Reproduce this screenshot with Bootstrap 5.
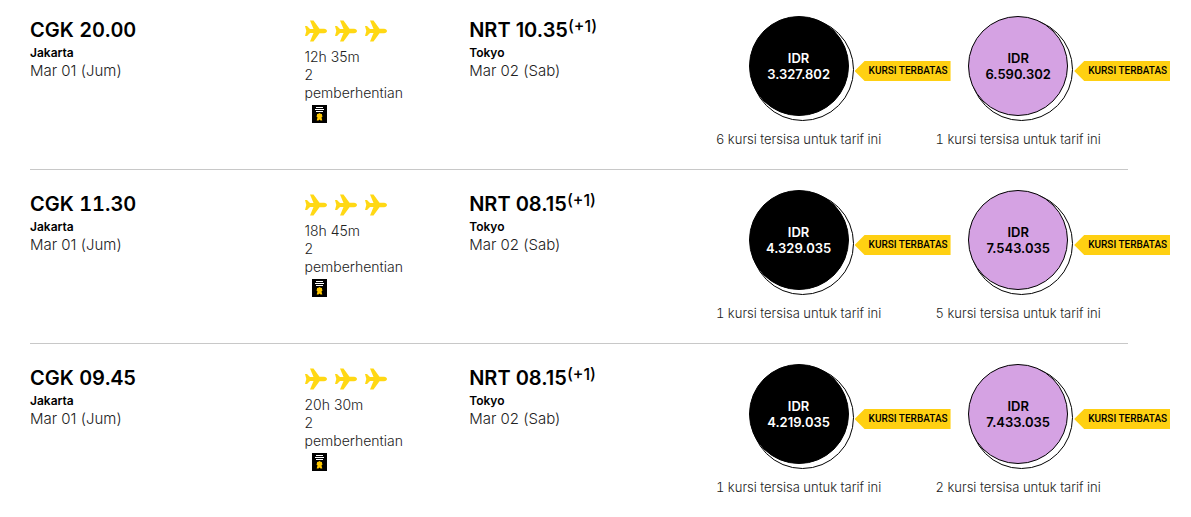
<!DOCTYPE html>
<html lang="id">
<head>
<meta charset="utf-8">
<meta name="viewport" content="width=device-width, initial-scale=1">
<title>Pilih penerbangan</title>
<link href="https://cdn.jsdelivr.net/npm/bootstrap@5.3.0/dist/css/bootstrap.min.css" rel="stylesheet">
<style>
  body { font-family: Inter, "Liberation Sans", sans-serif; font-size: 14px; line-height: 18px; color: #222; background: #fff; }
  .flights { padding: 0 63px 0 30px; margin-top: -4px; }
  .flight { height: 174px; padding-top: 20px; border-bottom: 1px solid #c8c8c8; }
  .flight:last-child { border-bottom: 0; height: 170px; }
  .w-depart { width: 25%; }
  .w-depart .time { font-variant-numeric: tabular-nums; }
  .w-route { width: 15%; }
  .w-fifth { width: 20%; }
  .light { font-weight: 300; }
  .time { font-size: 20px; line-height: 28px; font-weight: 600; color: #000; margin: 0; white-space: nowrap; }
  .time sup { font-size: 16px; line-height: 0; font-weight: 500; top: -5px; vertical-align: baseline; }
  .city { font-size: 12px; line-height: 18px; font-weight: 600; color: #000; }
  .date { font-size: 15px; }
  .stops { width: 105px; }
  .planes { height: 32px; padding-top: 4px; }
  .plane { width: 22px; height: 22px; fill: #ffd814; }
  .cert { width: 15px; height: 18px; margin: 3px 0 0 7px; display: block; }
  .fare-circle { width: 100px; height: 100px; }
  .fare-circle::before { content: ""; position: absolute; inset: 2px -5px -5px 2px; border: 1px solid #000; border-radius: 50%; }
  .fare-btn { position: relative; width: 100px; height: 100px; border: 1px solid #000; border-radius: 50%; font-size: 13px; line-height: 16px; font-weight: 600; padding: 0; }
  .fare-dark { background: #000; color: #fff; }
  .fare-lilac { background: #d5a2e3; color: #000; }
  .limited { left: 106px; top: 45px; width: 96px; height: 20px; padding-left: 14px; background: #ffd012; color: #000; font-family: Roboto, sans-serif; font-size: 10px; line-height: 20px; font-weight: 500; white-space: nowrap; clip-path: polygon(0 50%, 10px 0, 100% 0, 100% 100%, 10px 100%); }
  .seats { margin-top: 14px; font-size: 13px; white-space: nowrap; font-variant-numeric: tabular-nums; }
</style>
</head>
<body>
<svg class="d-none" aria-hidden="true">
  <symbol id="plane" viewBox="0 0 22 22">
    <path d="M0 6h2l3 3h3.500L5 .5h3.500l6 8.200h4.500c1.800 0 3 1.100 3 2.300s-1.200 2.300-3 2.300h-4.500l-6 8.200H5L8.500 13H5l-3 3H0l1.300-5z"/>
  </symbol>
  <symbol id="cert" viewBox="0 0 15 18">
    <path fill="#000" d="M0 0h15v18H0z"/>
    <path stroke="#fff" d="M4 2.500h7M3 4.500h9M4 6.500h7"/>
    <path fill="#ffc800" d="m7.500 8 1.200.7 1.200.3.2 1.300.4 1.200-1 1 .8 3H8.500l-1-1-1 1H4.700l.8-3-1-1 .4-1.200L5.100 9l1.200-.3z"/>
  </symbol>
</svg>
<main class="flights" id="flights"></main>
<script src="https://cdn.jsdelivr.net/npm/bootstrap@5.3.0/dist/js/bootstrap.bundle.min.js"></script>
<script>
  const flights = [
    { dep: "20.00", arr: "10.35", time: "12h 35m", fares: [["3.327.802", 6], ["6.590.302", 1]] },
    { dep: "11.30", arr: "08.15", time: "18h 45m", fares: [["4.329.035", 1], ["7.543.035", 5]] },
    { dep: "09.45", arr: "08.15", time: "20h 30m", fares: [["4.219.035", 1], ["7.433.035", 2]] }
  ];
  const plane = '<svg class="plane" aria-hidden="true"><use href="#plane"/></svg>';
  const fare = ([price, seats], i) => `
    <div class="w-fifth d-flex flex-column align-items-center">
      <div class="fare-circle position-relative">
        <button type="button" class="fare-btn ${i ? "fare-lilac" : "fare-dark"}">IDR<br>${price}</button>
        <span class="limited position-absolute">KURSI TERBATAS</span>
      </div>
      <div class="seats light">${seats} kursi tersisa untuk tarif ini</div>
    </div>`;
  document.getElementById("flights").innerHTML = flights.map(f => `
    <section class="flight d-flex">
      <div class="w-depart">
        <h2 class="time">CGK ${f.dep}</h2>
        <div class="city">Jakarta</div>
        <div class="date light">Mar 01 (Jum)</div>
      </div>
      <div class="w-route">
        <div class="planes d-flex gap-2">${plane.repeat(3)}</div>
        <div class="stops light">${f.time}<br>2 pemberhentian</div>
        <svg class="cert" role="img" aria-label="Info"><use href="#cert"/></svg>
      </div>
      <div class="w-fifth">
        <h2 class="time">NRT ${f.arr}<sup>(+1)</sup></h2>
        <div class="city">Tokyo</div>
        <div class="date light">Mar 02 (Sab)</div>
      </div>
      ${f.fares.map(fare).join("")}
    </section>`).join("");
</script>
</body>
</html>
